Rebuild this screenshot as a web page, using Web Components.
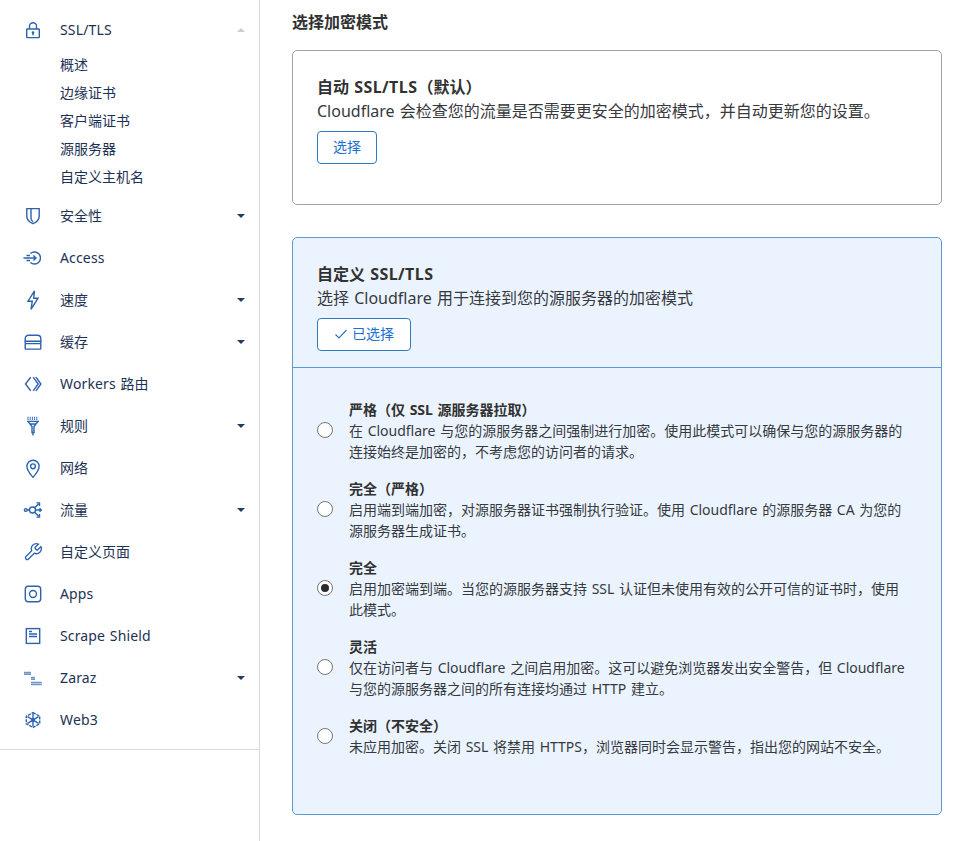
<!DOCTYPE html>
<html lang="zh-CN"><head><meta charset="utf-8"><title>SSL/TLS</title>
<style>
html,body{margin:0;height:100%;overflow:hidden;background:#fff;}
body{font-family:"Noto Sans","Noto Sans CJK SC",sans-serif;font-size:14px;word-spacing:1px;}
</style></head><body>
<app-shell>
  <side-nav slot="nav">
    <nav-item label="SSL/TLS" caret="up"><svg viewBox="0 0 20 20"><rect x="3.700" y="9" width="12.600" height="8.600" rx=".6"/><path d="M6.500 9V6.200a3.500 3.500 0 0 1 7 0V9"/><circle fill="#2d63ad" stroke="none" cx="10" cy="12.500" r="1.300"/><path d="M10 13v2.200" stroke-width="1.500"/></svg></nav-item>
    <sub-list>
      <sub-item>概述</sub-item><sub-item>边缘证书</sub-item><sub-item>客户端证书</sub-item><sub-item>源服务器</sub-item><sub-item>自定义主机名</sub-item>
    </sub-list>
    <nav-item label="安全性" caret="down"><svg viewBox="0 0 20 20"><path d="M3.800 2.600h12.400v7.600c0 3.600-3 6-6.200 7.500-3.200-1.500-6.200-3.900-6.200-7.500z"/><path d="M8 2.600v9.600c0 1.600 1 2.800 2 3.600"/></svg></nav-item>
    <nav-item label="Access"><svg viewBox="0 0 20 20"><path d="M7.400 5.600A6 6 0 1 1 7.400 14.400"/><path d="M.5 10H13M10.400 7.400 13 10l-2.600 2.600M3.500 7.500h3.500M3.500 12.500h3.500"/></svg></nav-item>
    <nav-item label="速度" caret="down"><svg viewBox="0 0 20 20"><path d="M11.500.8 5 11.200h4.300L8 19.400l7-11.200h-4.300z"/></svg></nav-item>
    <nav-item label="缓存" caret="down"><svg viewBox="0 0 20 20"><path d="M2.200 9.200V6.700C2.200 4.600 3.600 3.300 5.500 3.300h9c1.900 0 3.300 1.300 3.300 3.400v2.500z"/><rect x="2.200" y="11.600" width="15.600" height="5.500" rx=".6"/><path d="M2.200 9.200v2.400M17.800 9.200v2.400"/></svg></nav-item>
    <nav-item label="Workers 路由"><svg viewBox="0 0 20 20"><path d="M7.700 3.200 2.500 10l5.200 6.800"/><path d="M10.200 3.200 15.200 10l-5 6.800M13 3.200 17.900 10 13 16.800"/></svg></nav-item>
    <nav-item label="规则" caret="down"><svg viewBox="0 0 20 20"><path stroke-dasharray="1 1.200" d="M4.500 1.500h11M4.500 3.200h11"/><path d="M4 5.400h12M5 5.400 9 10.500v6h2v-6l4-5.100M7 8h6M10 16.500v3"/></svg></nav-item>
    <nav-item label="网络"><svg viewBox="0 0 20 20"><path d="M10 19.400C6.600 15.600 3.900 12 3.900 8.300a6.100 6.100 0 0 1 12.200 0c0 3.700-2.700 7.300-6.100 11.100z"/><circle cx="10" cy="8.300" r="2.400"/></svg></nav-item>
    <nav-item label="流量" caret="down"><svg viewBox="0 0 20 20"><circle cx="2.800" cy="10" r="1.400"/><circle cx="9.500" cy="10" r="3"/><path d="M4.200 10h2.300M11.600 7.800 15.500 4M12.500 10h5.500M11.600 12.200l3.900 3.800M13.500 2.900h3v3M16.500 8.300 18.300 10l-1.800 1.700M13.500 17.100h3v-3"/></svg></nav-item>
    <nav-item label="自定义页面"><svg viewBox="0 0 24 24"><path stroke-width="1.600" d="M14.700 6.300a1 1 0 0 0 0 1.400l1.600 1.600a1 1 0 0 0 1.400 0l3.770-3.770a6 6 0 0 1-7.940 7.940l-6.910 6.910a2.120 2.120 0 0 1-3-3l6.910-6.910a6 6 0 0 1 7.940-7.940l-3.760 3.760z"/></svg></nav-item>
    <nav-item label="Apps"><svg viewBox="0 0 20 20"><rect x="2.300" y="2.300" width="15.400" height="15.400" rx="3"/><circle cx="10" cy="10" r="3.500"/></svg></nav-item>
    <nav-item label="Scrape Shield"><svg viewBox="0 0 20 20"><rect x="3.300" y="2.600" width="13.400" height="14.800"/><path d="M6 5.500h3M6 8h8M6 10.500h8"/></svg></nav-item>
    <nav-item label="Zaraz" caret="down"><svg viewBox="0 0 20 20"><path stroke="#6f95c9" d="M1 4.500h7M1 6.200h7M8 9.500h4M8 11.200h4M8 14.500h10.800M8 16.500h10.800"/></svg></nav-item>
    <nav-item label="Web3"><svg viewBox="0 0 20 20"><path stroke-dasharray="3 1" d="M10 2.600 16.700 6.200v7.600L10 17.400 3.300 13.800V6.200z"/><path d="M10 3.500v13M4.500 6.700l11 6.600M15.500 6.700l-11 6.600"/><circle fill="#2d63ad" stroke="none" cx="10" cy="10" r="2"/></svg></nav-item>
  </side-nav>
  <main-pane>
    <h2 slot="heading">选择加密模式</h2>
    <mode-card heading="自动 SSL/TLS（默认）" text="Cloudflare 会检查您的流量是否需要更安全的加密模式，并自动更新您的设置。">
      <action-button slot="action">选择</action-button>
    </mode-card>
    <mode-card active heading="自定义 SSL/TLS" text="选择 Cloudflare 用于连接到您的源服务器的加密模式">
      <action-button slot="action" checked>已选择</action-button>
      <mode-option slot="options" heading="严格（仅 SSL 源服务器拉取）">在 Cloudflare 与您的源服务器之间强制进行加密。使用此模式可以确保与您的源服务器的<br>连接始终是加密的，不考虑您的访问者的请求。</mode-option>
      <mode-option slot="options" heading="完全（严格）">启用端到端加密，对源服务器证书强制执行验证。使用 Cloudflare 的源服务器 CA 为您的<br>源服务器生成证书。</mode-option>
      <mode-option slot="options" checked heading="完全">启用加密端到端。当您的源服务器支持 SSL 认证但未使用有效的公开可信的证书时，使用<br>此模式。</mode-option>
      <mode-option slot="options" heading="灵活">仅在访问者与 Cloudflare 之间启用加密。这可以避免浏览器发出安全警告，但 Cloudflare<br>与您的源服务器之间的所有连接均通过 HTTP 建立。</mode-option>
      <mode-option slot="options" heading="关闭（不安全）">未应用加密。关闭 SSL 将禁用 HTTPS，浏览器同时会显示警告，指出您的网站不安全。</mode-option>
    </mode-card>
  </main-pane>
</app-shell>
<script>
function def(name, html){
  customElements.define(name, class extends HTMLElement{
    connectedCallback(){
      if(this.shadowRoot) return;
      const r=this.attachShadow({mode:'open'});
      r.innerHTML=typeof html==='function'?html(this):html;
    }
  });
}
const esc=s=>(s||'').replace(/&/g,'&amp;').replace(/</g,'&lt;');
const latin=s=>esc(s).replace(/[A-Za-z\/0-9]+/g,'<span class="la">$&</span>');
def('app-shell',`<style>:host{display:flex;height:100vh;width:100%;}</style><slot name="nav"></slot><slot></slot>`);
def('side-nav',`<style>:host{display:block;flex:0 0 259px;width:259px;height:100%;border-right:1px solid #d9d9d9;}
.w{padding:9px 0 8px;border-bottom:1px solid #d9d9d9;}</style><div class="w"><slot></slot></div>`);
def('nav-item',h=>{
  const c=h.getAttribute('caret');
  return `<style>:host{display:flex;align-items:center;height:42px;padding:0 14px 0 23px;color:#1d3155;font-size:14px;}
  .i{flex:0 0 20px;width:20px;height:20px;margin-right:17px;display:flex;}
  ::slotted(svg){width:20px;height:20px;fill:none;stroke:#2d63ad;stroke-width:1.4;}
  .t{flex:1;white-space:nowrap;padding-bottom:2px;}
  .la{letter-spacing:.15px;}
  .c{width:0;height:0;border-left:4px solid transparent;border-right:4px solid transparent;}
  .c.down{border-top:4.500px solid #1f3c6b;}
  .c.up{border-bottom:4.500px solid #c6d0dd;}
  </style><span class="i"><slot></slot></span><span class="t">${latin(h.getAttribute('label'))}</span>${c?`<span class="c ${c}"></span>`:''}`;
});
def('sub-list',`<style>:host{display:block;padding-bottom:4px;}</style><slot></slot>`);
def('sub-item',`<style>:host{display:flex;align-items:center;box-sizing:border-box;height:28px;padding:0 0 2px 60px;color:#1d3155;font-size:14px;}</style><slot></slot>`);
def('main-pane',`<style>:host{display:block;flex:1;min-width:0;padding:0 29px 0 32px;}
::slotted(h2){margin:0;height:42px;display:flex;align-items:center;font-size:16px;font-weight:700;color:#313131;}
.g{display:flex;flex-direction:column;gap:32px;padding-top:8px;}</style><slot name="heading"></slot><div class="g"><slot></slot></div>`);
def('mode-card',h=>{
  const a=h.hasAttribute('active');
  return `<style>:host{display:block;box-sizing:border-box;border:1px solid ${a?'#5b9bd5':'#a3a3a3'};border-radius:5px;background:${a?'#ebf4fe':'#fff'};height:${a?'578px':'155px'};color:#36393f;}
  .h{padding:24px 24px 0;${a?'height:105px;border-bottom:1px solid #5b9bd5;':''}}
  .n{font-size:16px;font-weight:700;line-height:24px;color:#313131;}
  .n .la{letter-spacing:.43px;}
  .p{font-size:16px;line-height:24px;margin-bottom:8px;white-space:nowrap;}
  .o{padding:31px 24px 0;display:flex;flex-direction:column;gap:16px;}
  </style><div class="h"><div class="n">${latin(h.getAttribute('heading'))}</div><div class="p">${esc(h.getAttribute('text'))}</div><slot name="action"></slot></div>${a?'<div class="o"><slot name="options"></slot></div>':''}`;
});
def('action-button',h=>{
  const c=h.hasAttribute('checked');
  return `<style>:host{display:inline-flex;box-sizing:border-box;align-items:center;justify-content:center;gap:4px;height:33px;padding:0 ${c?'16px':'15px'};background:#fff;border:1px solid #2c7cc1;border-radius:4px;color:#1a6fd0;font-size:14px;}
  span{padding-bottom:3px;}
  svg{width:14px;height:14px;fill:none;stroke:#2c6fc1;stroke-width:1.100;margin-top:-1px;}</style>${c?'<svg viewBox="0 0 14 14"><path d="M1.500 7.500 5 11l7.500-8"/></svg>':''}<span><slot></slot></span>`;
});
def('mode-option',h=>{
  const c=h.hasAttribute('checked');
  return `<style>:host{display:flex;align-items:center;font-size:14px;line-height:21px;color:#36393f;}
  .r{flex:0 0 16px;box-sizing:border-box;width:16px;height:16px;border-radius:50%;border:1px solid #767676;background:#fff;margin:0 16px 1px 0;display:flex;align-items:center;justify-content:center;}
  .r i{display:block;width:8px;height:8px;border-radius:50%;background:#2b2b2b;}
  .n{font-weight:700;color:#313131;}
  .b{white-space:nowrap;}
  </style><span class="r">${c?'<i></i>':''}</span><div class="b"><div class="n">${esc(h.getAttribute('heading'))}</div><slot></slot></div>`;
});
</script>
</body></html>
